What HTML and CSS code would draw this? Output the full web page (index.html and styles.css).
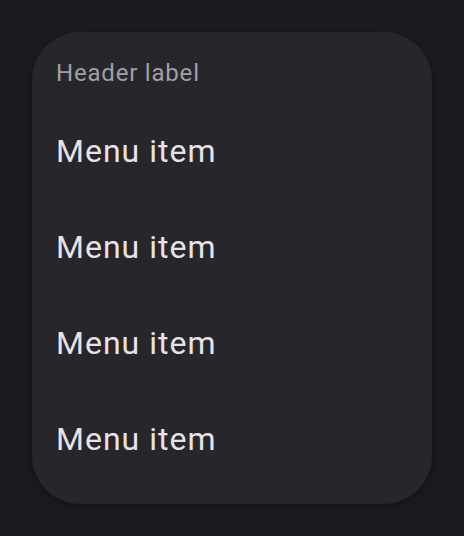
FILE: index.html
```html
<!DOCTYPE html>
<html lang="en">
<head>
  <meta charset="UTF-8" />
  <meta name="viewport" content="width=device-width, initial-scale=1.0"/>
  <title>Menu</title>
  <link rel="stylesheet" href="styles.css">
</head>
<body>
  <div class="menu">
    <div class="menu-header">Header label</div>
    <div class="menu-item">Menu item</div>
    <div class="menu-item">Menu item</div>
    <div class="menu-item">Menu item</div>
    <div class="menu-item">Menu item</div>
  </div>
</body>
</html>
```

FILE: styles.css
```css
* {
  box-sizing: border-box;
}

body {
  margin: 0;
  padding: 32px;
  background: #1c1a1f;
  font-family: Roboto, "Noto Sans", sans-serif;
  height: 100vh;
}

.menu {
  width: 400px;
  background: #27262b;
  border-radius: 48px;
  padding: 13px 0 17px;
  box-shadow: 0 2px 6px rgba(0, 0, 0, 0.35);
}

.menu-header {
  padding: 0 24px 2px;
  font-size: 24px;
  line-height: 56px;
  letter-spacing: 0.8px;
  color: #a19fa6;
}

.menu-item {
  padding: 0 24px;
  font-size: 32px;
  line-height: 96px;
  letter-spacing: 1px;
  color: #e7e2ea;
}
```
